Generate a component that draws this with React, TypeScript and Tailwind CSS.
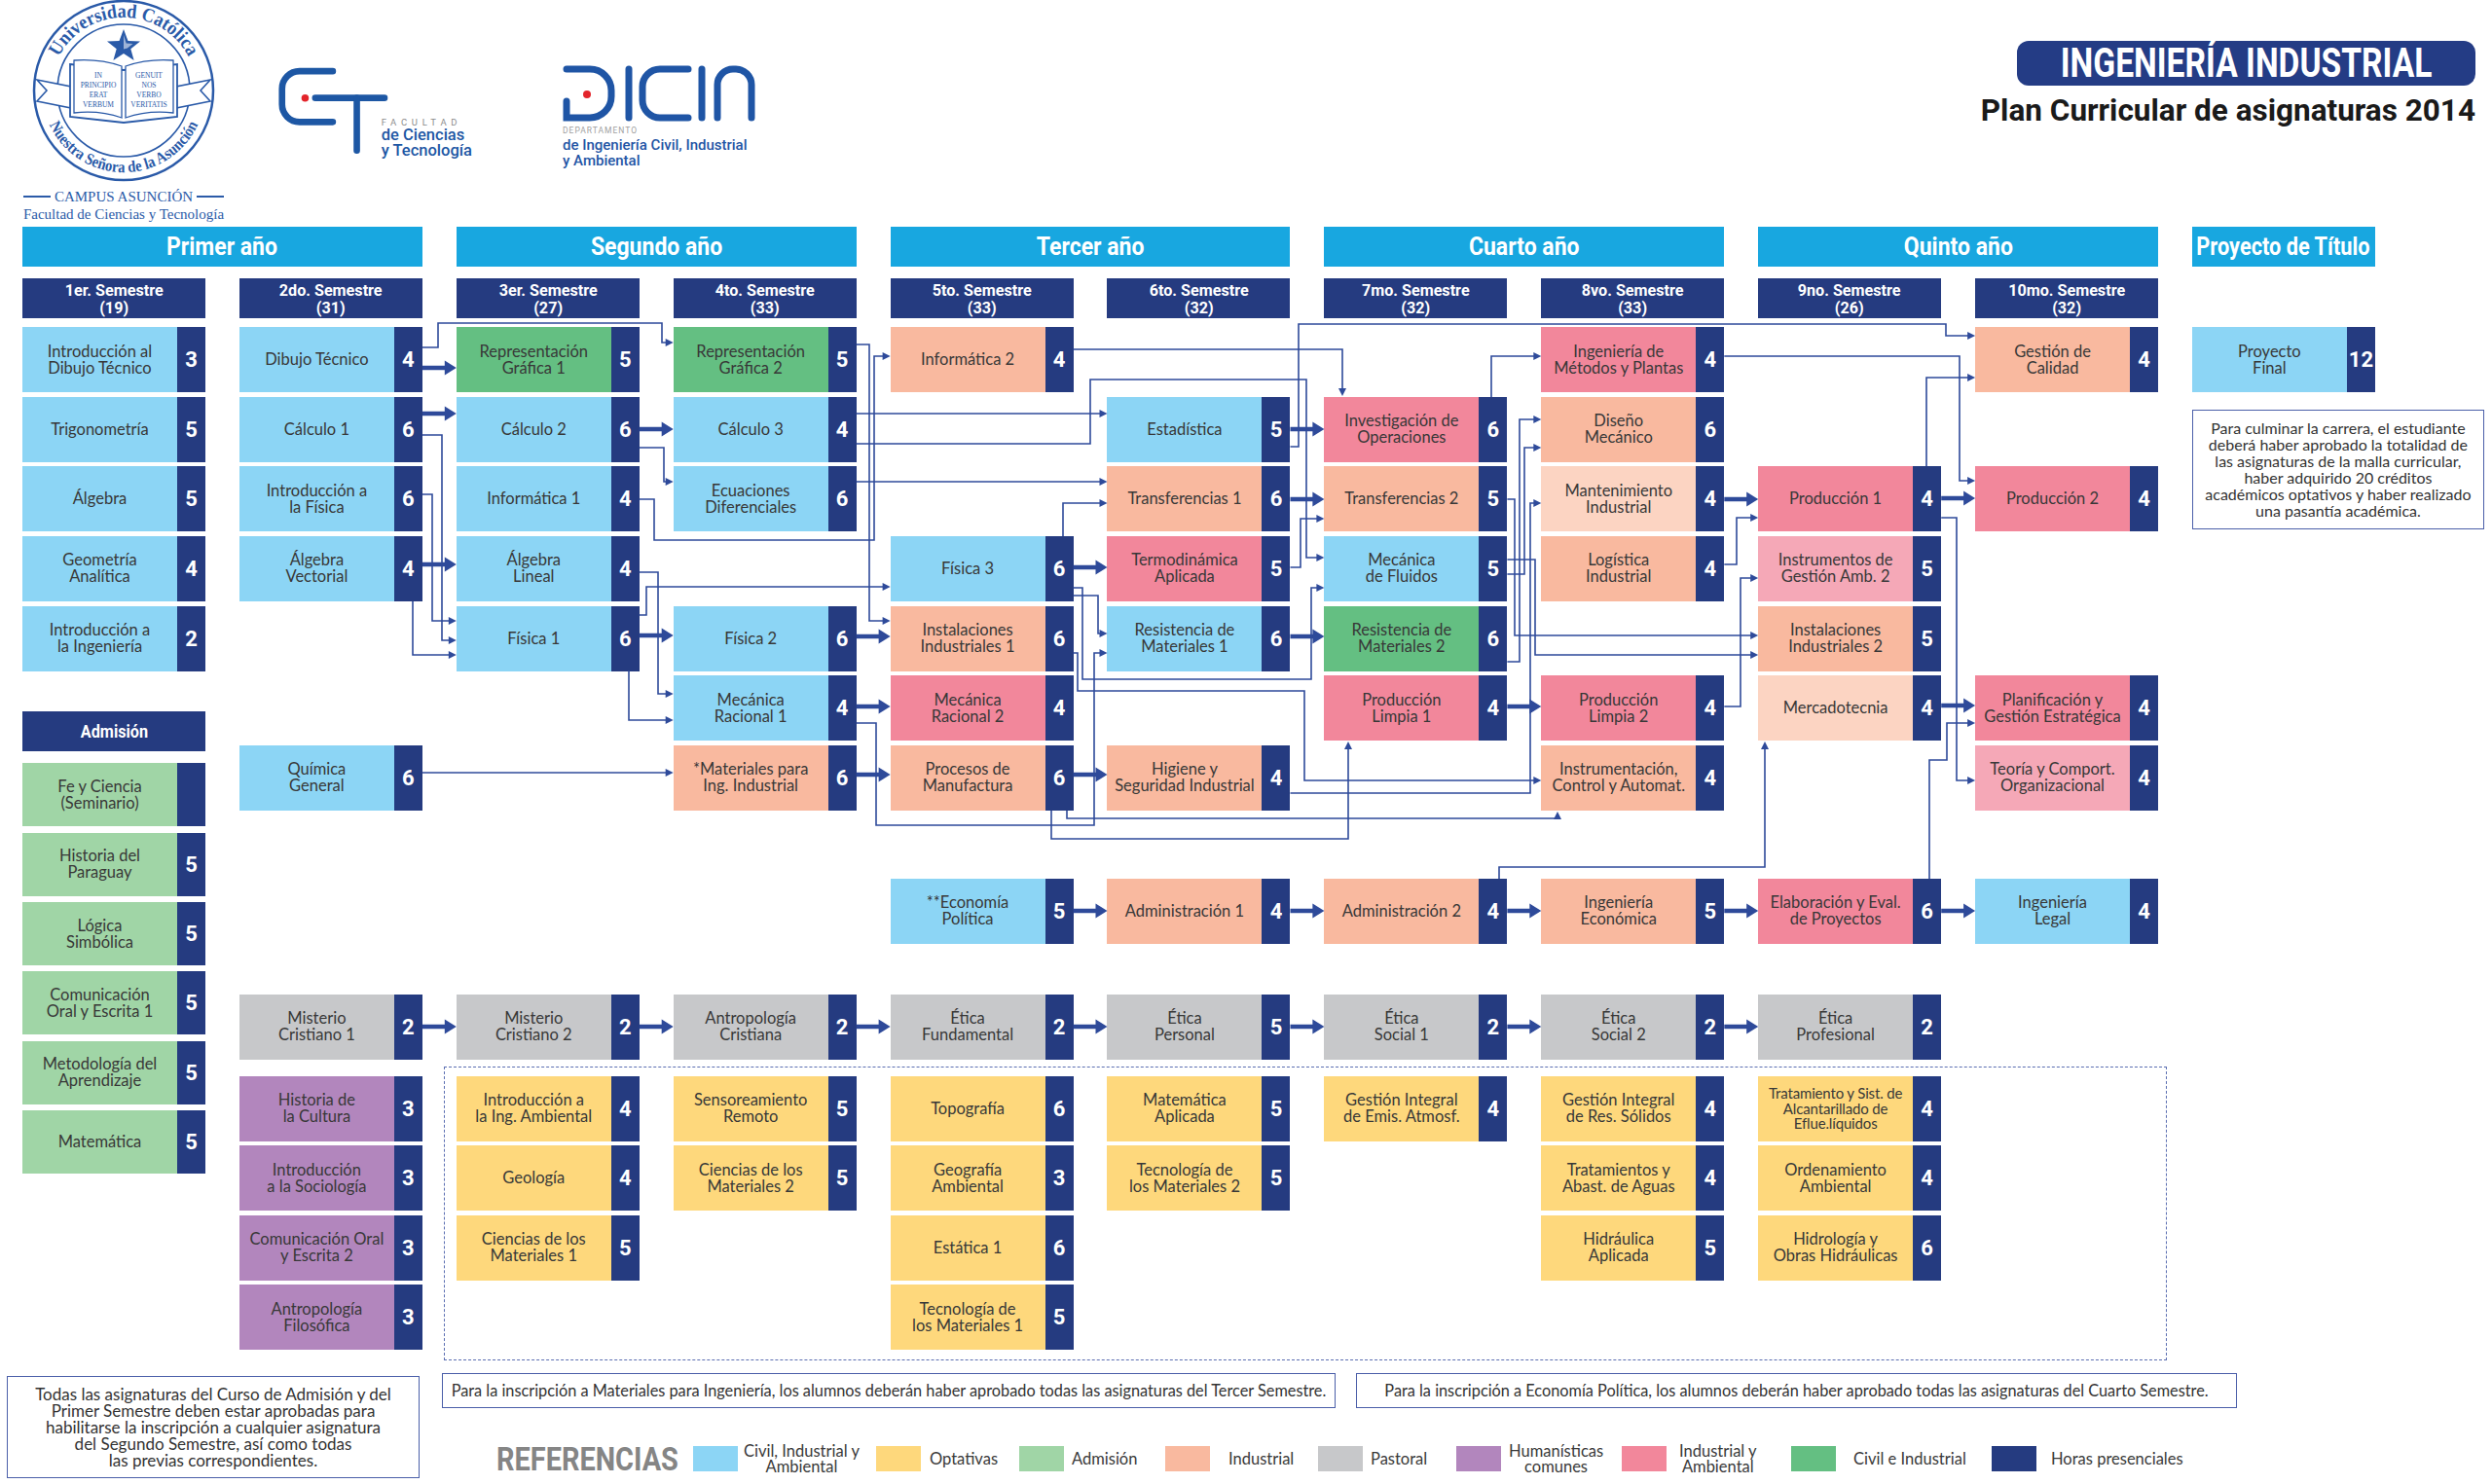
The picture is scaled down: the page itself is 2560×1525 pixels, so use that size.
import React from "react";

type Subject = { c: number; r: number; t: string[]; n?: string; bg: string; sm?: boolean };

const BLUE = "bg-[#8cd5f5]";
const GREEN = "bg-[#64bf82]";
const SALMON = "bg-[#f9b99f]";
const PEACH = "bg-[#fcd4c2]";
const PINK = "bg-[#f2879b]";
const LPINK = "bg-[#f5a8b7]";
const GRAY = "bg-[#c7c8ca]";
const PURPLE = "bg-[#b286bd]";
const YELLOW = "bg-[#fed87c]";
const ADM = "bg-[#a0d5a6]";
const NAVY = "bg-[#253b80]";

const COL: Record<number, string> = {
  1: "col-start-1",
  2: "col-start-2",
  3: "col-start-3",
  4: "col-start-4",
  5: "col-start-5",
  6: "col-start-6",
  7: "col-start-7",
  8: "col-start-8",
  9: "col-start-9",
  10: "col-start-10",
  11: "col-start-11",
};

const ROW: Record<number, string> = {
  1: "row-start-1",
  2: "row-start-2",
  3: "row-start-3",
  4: "row-start-4",
  5: "row-start-5",
  6: "row-start-6",
  7: "row-start-7",
  8: "row-start-8",
  9: "row-start-9",
  10: "row-start-10",
  11: "row-start-11",
  12: "row-start-12",
  13: "row-start-13",
  14: "row-start-14",
  15: "row-start-15",
};

// rows: 3-9 main rows, 10 economia, 11 pastoral, 12-15 optativas
const subjects: Subject[] = [
  { c: 1, r: 3, t: ["Introducción al", "Dibujo Técnico"], n: "3", bg: BLUE },
  { c: 1, r: 4, t: ["Trigonometría"], n: "5", bg: BLUE },
  { c: 1, r: 5, t: ["Álgebra"], n: "5", bg: BLUE },
  { c: 1, r: 6, t: ["Geometría", "Analítica"], n: "4", bg: BLUE },
  { c: 1, r: 7, t: ["Introducción a", "la Ingeniería"], n: "2", bg: BLUE },

  { c: 2, r: 3, t: ["Dibujo Técnico"], n: "4", bg: BLUE },
  { c: 2, r: 4, t: ["Cálculo 1"], n: "6", bg: BLUE },
  { c: 2, r: 5, t: ["Introducción a", "la Física"], n: "6", bg: BLUE },
  { c: 2, r: 6, t: ["Álgebra", "Vectorial"], n: "4", bg: BLUE },
  { c: 2, r: 9, t: ["Química", "General"], n: "6", bg: BLUE },
  { c: 2, r: 11, t: ["Misterio", "Cristiano 1"], n: "2", bg: GRAY },
  { c: 2, r: 12, t: ["Historia de", "la Cultura"], n: "3", bg: PURPLE },
  { c: 2, r: 13, t: ["Introducción", "a la Sociología"], n: "3", bg: PURPLE },
  { c: 2, r: 14, t: ["Comunicación Oral", "y Escrita 2"], n: "3", bg: PURPLE },
  { c: 2, r: 15, t: ["Antropología", "Filosófica"], n: "3", bg: PURPLE },

  { c: 3, r: 3, t: ["Representación", "Gráfica 1"], n: "5", bg: GREEN },
  { c: 3, r: 4, t: ["Cálculo 2"], n: "6", bg: BLUE },
  { c: 3, r: 5, t: ["Informática 1"], n: "4", bg: BLUE },
  { c: 3, r: 6, t: ["Álgebra", "Lineal"], n: "4", bg: BLUE },
  { c: 3, r: 7, t: ["Física 1"], n: "6", bg: BLUE },
  { c: 3, r: 11, t: ["Misterio", "Cristiano 2"], n: "2", bg: GRAY },
  { c: 3, r: 12, t: ["Introducción a", "la Ing. Ambiental"], n: "4", bg: YELLOW },
  { c: 3, r: 13, t: ["Geología"], n: "4", bg: YELLOW },
  { c: 3, r: 14, t: ["Ciencias de los", "Materiales 1"], n: "5", bg: YELLOW },

  { c: 4, r: 3, t: ["Representación", "Gráfica 2"], n: "5", bg: GREEN },
  { c: 4, r: 4, t: ["Cálculo 3"], n: "4", bg: BLUE },
  { c: 4, r: 5, t: ["Ecuaciones", "Diferenciales"], n: "6", bg: BLUE },
  { c: 4, r: 7, t: ["Física 2"], n: "6", bg: BLUE },
  { c: 4, r: 8, t: ["Mecánica", "Racional 1"], n: "4", bg: BLUE },
  { c: 4, r: 9, t: ["*Materiales para", "Ing. Industrial"], n: "6", bg: SALMON },
  { c: 4, r: 11, t: ["Antropología", "Cristiana"], n: "2", bg: GRAY },
  { c: 4, r: 12, t: ["Sensoreamiento", "Remoto"], n: "5", bg: YELLOW },
  { c: 4, r: 13, t: ["Ciencias de los", "Materiales 2"], n: "5", bg: YELLOW },

  { c: 5, r: 3, t: ["Informática 2"], n: "4", bg: SALMON },
  { c: 5, r: 6, t: ["Física 3"], n: "6", bg: BLUE },
  { c: 5, r: 7, t: ["Instalaciones", "Industriales 1"], n: "6", bg: SALMON },
  { c: 5, r: 8, t: ["Mecánica", "Racional 2"], n: "4", bg: PINK },
  { c: 5, r: 9, t: ["Procesos de", "Manufactura"], n: "6", bg: SALMON },
  { c: 5, r: 10, t: ["**Economía", "Política"], n: "5", bg: BLUE },
  { c: 5, r: 11, t: ["Ética", "Fundamental"], n: "2", bg: GRAY },
  { c: 5, r: 12, t: ["Topografía"], n: "6", bg: YELLOW },
  { c: 5, r: 13, t: ["Geografía", "Ambiental"], n: "3", bg: YELLOW },
  { c: 5, r: 14, t: ["Estática 1"], n: "6", bg: YELLOW },
  { c: 5, r: 15, t: ["Tecnología de", "los Materiales 1"], n: "5", bg: YELLOW },

  { c: 6, r: 4, t: ["Estadística"], n: "5", bg: BLUE },
  { c: 6, r: 5, t: ["Transferencias 1"], n: "6", bg: SALMON },
  { c: 6, r: 6, t: ["Termodinámica", "Aplicada"], n: "5", bg: PINK },
  { c: 6, r: 7, t: ["Resistencia de", "Materiales 1"], n: "6", bg: BLUE },
  { c: 6, r: 9, t: ["Higiene y", "Seguridad Industrial"], n: "4", bg: SALMON },
  { c: 6, r: 10, t: ["Administración 1"], n: "4", bg: SALMON },
  { c: 6, r: 11, t: ["Ética", "Personal"], n: "5", bg: GRAY },
  { c: 6, r: 12, t: ["Matemática", "Aplicada"], n: "5", bg: YELLOW },
  { c: 6, r: 13, t: ["Tecnología de", "los Materiales 2"], n: "5", bg: YELLOW },

  { c: 7, r: 4, t: ["Investigación de", "Operaciones"], n: "6", bg: PINK },
  { c: 7, r: 5, t: ["Transferencias 2"], n: "5", bg: SALMON },
  { c: 7, r: 6, t: ["Mecánica", "de Fluidos"], n: "5", bg: BLUE },
  { c: 7, r: 7, t: ["Resistencia de", "Materiales 2"], n: "6", bg: GREEN },
  { c: 7, r: 8, t: ["Producción", "Limpia 1"], n: "4", bg: PINK },
  { c: 7, r: 10, t: ["Administración 2"], n: "4", bg: SALMON },
  { c: 7, r: 11, t: ["Ética", "Social 1"], n: "2", bg: GRAY },
  { c: 7, r: 12, t: ["Gestión Integral", "de Emis. Atmosf."], n: "4", bg: YELLOW },

  { c: 8, r: 3, t: ["Ingeniería de", "Métodos y Plantas"], n: "4", bg: PINK },
  { c: 8, r: 4, t: ["Diseño", "Mecánico"], n: "6", bg: SALMON },
  { c: 8, r: 5, t: ["Mantenimiento", "Industrial"], n: "4", bg: PEACH },
  { c: 8, r: 6, t: ["Logística", "Industrial"], n: "4", bg: SALMON },
  { c: 8, r: 8, t: ["Producción", "Limpia 2"], n: "4", bg: PINK },
  { c: 8, r: 9, t: ["Instrumentación,", "Control y Automat."], n: "4", bg: SALMON },
  { c: 8, r: 10, t: ["Ingeniería", "Económica"], n: "5", bg: SALMON },
  { c: 8, r: 11, t: ["Ética", "Social 2"], n: "2", bg: GRAY },
  { c: 8, r: 12, t: ["Gestión Integral", "de Res. Sólidos"], n: "4", bg: YELLOW },
  { c: 8, r: 13, t: ["Tratamientos y", "Abast. de Aguas"], n: "4", bg: YELLOW },
  { c: 8, r: 14, t: ["Hidráulica", "Aplicada"], n: "5", bg: YELLOW },

  { c: 9, r: 5, t: ["Producción 1"], n: "4", bg: PINK },
  { c: 9, r: 6, t: ["Instrumentos de", "Gestión Amb. 2"], n: "5", bg: LPINK },
  { c: 9, r: 7, t: ["Instalaciones", "Industriales 2"], n: "5", bg: SALMON },
  { c: 9, r: 8, t: ["Mercadotecnia"], n: "4", bg: PEACH },
  { c: 9, r: 10, t: ["Elaboración y Eval.", "de Proyectos"], n: "6", bg: PINK },
  { c: 9, r: 11, t: ["Ética", "Profesional"], n: "2", bg: GRAY },
  { c: 9, r: 12, t: ["Tratamiento y Sist. de", "Alcantarillado de", "Eflue.líquidos"], n: "4", bg: YELLOW, sm: true },
  { c: 9, r: 13, t: ["Ordenamiento", "Ambiental"], n: "4", bg: YELLOW },
  { c: 9, r: 14, t: ["Hidrología y", "Obras Hidráulicas"], n: "6", bg: YELLOW },

  { c: 10, r: 3, t: ["Gestión de", "Calidad"], n: "4", bg: SALMON },
  { c: 10, r: 5, t: ["Producción 2"], n: "4", bg: PINK },
  { c: 10, r: 8, t: ["Planificación y", "Gestión Estratégica"], n: "4", bg: PINK },
  { c: 10, r: 9, t: ["Teoría y Comport.", "Organizacional"], n: "4", bg: LPINK },
  { c: 10, r: 10, t: ["Ingeniería", "Legal"], n: "4", bg: BLUE },

  { c: 11, r: 3, t: ["Proyecto", "Final"], n: "12", bg: BLUE },
];

const admision: { t: string[]; n?: string }[] = [
  { t: ["Fe y Ciencia", "(Seminario)"] },
  { t: ["Historia del", "Paraguay"], n: "5" },
  { t: ["Lógica", "Simbólica"], n: "5" },
  { t: ["Comunicación", "Oral y Escrita 1"], n: "5" },
  { t: ["Metodología del", "Aprendizaje"], n: "5" },
  { t: ["Matemática"], n: "5" },
];

const years = [
  { cls: "col-start-1 col-span-2", label: "Primer año", sc: "scale-x-[0.92]" },
  { cls: "col-start-3 col-span-2", label: "Segundo año", sc: "scale-x-[0.92]" },
  { cls: "col-start-5 col-span-2", label: "Tercer año", sc: "scale-x-[0.92]" },
  { cls: "col-start-7 col-span-2", label: "Cuarto año", sc: "scale-x-[0.92]" },
  { cls: "col-start-9 col-span-2", label: "Quinto año", sc: "scale-x-[0.92]" },
  { cls: "col-start-11", label: "Proyecto de Título", sc: "scale-x-[0.87]" },
];

const semesters = [
  ["1er. Semestre", "(19)"],
  ["2do. Semestre", "(31)"],
  ["3er. Semestre", "(27)"],
  ["4to. Semestre", "(33)"],
  ["5to. Semestre", "(33)"],
  ["6to. Semestre", "(32)"],
  ["7mo. Semestre", "(32)"],
  ["8vo. Semestre", "(33)"],
  ["9no. Semestre", "(26)"],
  ["10mo. Semestre", "(32)"],
];

const legend = [
  { bg: BLUE, label: ["Civil, Industrial y", "Ambiental"], w: "w-[188px]", gap: "ml-[6px]" },
  { bg: YELLOW, label: ["Optativas"], w: "w-[147px]", gap: "ml-[9px]" },
  { bg: ADM, label: ["Admisión"], w: "w-[150px]", gap: "ml-[8px]" },
  { bg: SALMON, label: ["Industrial"], w: "w-[157px]", gap: "ml-[19px]" },
  { bg: GRAY, label: ["Pastoral"], w: "w-[142px]", gap: "ml-[8px]" },
  { bg: PURPLE, label: ["Humanísticas", "comunes"], w: "w-[170px]", gap: "ml-[8px]" },
  { bg: PINK, label: ["Industrial y", "Ambiental"], w: "w-[174px]", gap: "ml-[13px]" },
  { bg: GREEN, label: ["Civil e Industrial"], w: "w-[206px]", gap: "ml-[18px]" },
  { bg: NAVY, label: ["Horas presenciales"], w: "w-[220px]", gap: "ml-[15px]" },
];

// connector geometry (page pixels)
const L = (c: number) => 23 + (c - 1) * 222.9;
const R = (c: number) => L(c) + 188;
const LINE = "#2e4a9a";

const thick: [number, number][] = [
  [2, 378], [2, 425], [2, 580],
  [3, 441], [3, 653],
  [4, 654], [4, 726], [4, 796],
  [5, 583], [5, 796],
  [6, 441], [6, 513], [6, 654],
  [7, 726],
  [8, 513],
  [9, 512], [9, 725],
  [5, 936], [6, 936], [7, 936], [8, 936], [9, 936],
  [2, 1055], [3, 1055], [4, 1055], [5, 1055], [6, 1055], [7, 1055], [8, 1055],
];

const thin: number[][][] = [
  [[R(2), 357], [450, 357], [450, 332], [680, 332], [680, 352], [L(4), 352]],
  [[R(2), 447], [454, 447], [454, 658], [L(3), 658]],
  [[R(2), 508], [444, 508], [444, 638], [L(3), 638]],
  [[424, 618], [424, 673], [L(3), 673]],
  [[R(3), 460], [682, 460], [682, 495], [L(4), 495]],
  [[R(3), 513], [672, 513], [672, 555], [898, 555], [898, 366], [L(5), 366]],
  [[R(3), 588], [676, 588], [676, 713], [L(4), 713]],
  [[646, 689], [646, 740], [L(4), 740]],
  [[R(3), 632], [664, 632], [664, 603], [L(5), 603]],
  [[R(2), 794], [L(4), 794]],
  [[R(4), 354], [893, 354], [893, 638], [L(5), 638]],
  [[R(4), 743], [900, 743], [900, 848], [1124, 848], [1124, 671], [L(6), 671]],
  [[R(4), 495], [L(6), 495]],
  [[R(4), 425], [L(6), 425]],
  [[R(4), 456], [1120, 456], [1120, 390], [1342, 390], [1342, 573], [L(7), 573]],
  [[1092, 551], [1092, 517], [L(6), 517]],
  [[R(5), 604], [1112, 604], [1112, 698], [1347, 698], [1347, 604], [L(7), 604]],
  [[R(5), 612], [1128, 612], [1128, 651], [L(6), 651]],
  [[R(5), 359], [1379, 359], [1379, 407]],
  [[R(6), 459], [1334, 459], [1334, 333], [1999, 333], [1999, 345], [L(10), 345]],
  [[R(6), 583], [1336, 583], [1336, 533], [L(7), 533]],
  [[1532, 408], [1532, 366], [L(8), 366]],
  [[R(8), 366], [2013, 366], [2013, 494], [L(10), 494]],
  [[1979, 479], [1979, 388], [L(10), 388]],
  [[R(9), 532], [2010, 532], [2010, 802], [L(10), 802]],
  [[R(8), 580], [1784, 580], [1784, 532], [L(9), 532]],
  [[R(8), 726], [1788, 726], [1788, 594], [L(9), 594]],
  [[R(7), 513], [1556, 513], [1556, 653], [L(9), 653]],
  [[R(7), 575], [1577, 575], [1577, 673], [L(9), 673]],
  [[R(7), 680], [1561, 680], [1561, 431], [L(8), 431]],
  [[R(7), 590], [1566, 590], [1566, 460], [L(8), 460]],
  [[R(6), 815], [1572, 815], [1572, 517], [L(8), 517]],
  [[R(5), 671], [1107, 671], [1107, 710], [1340, 710], [1340, 802], [L(8), 802]],
  [[1080, 833], [1080, 862], [1385, 862], [1385, 762]],
  [[1096, 833], [1096, 841], [1600, 841], [1600, 834]],
  [[1540, 903], [1540, 891], [1813, 891], [1813, 762]],
  [[1982, 903], [1982, 781], [2000, 781], [2000, 743], [L(10), 743]],
];

function Connectors() {
  return (
    <svg className="absolute left-0 top-0 pointer-events-none" width={2560} height={1525}>
      {thin.map((pts, i) => {
        const [x1, y1] = pts[pts.length - 2];
        const [x2, y2] = pts[pts.length - 1];
        const dx = x2 - x1;
        const dy = y2 - y1;
        const len = Math.hypot(dx, dy) || 1;
        const ux = dx / len;
        const uy = dy / len;
        const bx = x2 - ux * 8;
        const by = y2 - uy * 8;
        const px = -uy * 4;
        const py = ux * 4;
        const line = [...pts.slice(0, -1), [bx + ux, by + uy]];
        return (
          <g key={i}>
            <polyline
              points={line.map((p) => p.join(",")).join(" ")}
              fill="none"
              stroke={LINE}
              strokeWidth={1.6}
            />
            <polygon points={`${x2},${y2} ${bx + px},${by + py} ${bx - px},${by - py}`} fill={LINE} />
          </g>
        );
      })}
      {thick.map(([c, y], i) => {
        const x1 = R(c);
        const x2 = L(c + 1);
        return (
          <g key={`t${i}`}>
            <line x1={x1} y1={y} x2={x2 - 10} y2={y} stroke={LINE} strokeWidth={4.5} />
            <polygon points={`${x2 - 12},${y - 7.5} ${x2},${y} ${x2 - 12},${y + 7.5}`} fill={LINE} />
          </g>
        );
      })}
    </svg>
  );
}

function Lines({ t }: { t: string[] }) {
  return (
    <span className="whitespace-nowrap">
      {t.map((l, i) => (
        <React.Fragment key={i}>
          {i > 0 && <br />}
          {l}
        </React.Fragment>
      ))}
    </span>
  );
}

function Cell({ t, n, bg, sm, className }: { t: string[]; n?: string; bg: string; sm?: boolean; className: string }) {
  return (
    <div className={`${className} flex ${bg}`}>
      <div
        className={`flex-1 flex items-center justify-center text-center text-[#383838] ${
          sm ? "text-[15px] leading-[15.5px] tracking-[-0.01em]" : "text-[16.5px] leading-[17px]"
        }`}
      >
        <Lines t={t} />
      </div>
      <div className="w-[29px] shrink-0 bg-[#253b80] flex items-center justify-center text-white font-['Roboto',sans-serif] font-bold text-[22px]">
        {n}
      </div>
    </div>
  );
}

function Seal() {
  const blue = "#2a5aa8";
  return (
    <svg width="190" height="188" viewBox="0 0 190 188">
      <defs>
        <path id="sealTop" d="M 27 61.3 A 75 75 0 0 1 163 61.3" />
        <path id="sealBot" d="M 17.1 124.5 A 84 84 0 0 0 172.9 124.5" />
      </defs>
      <circle cx="95" cy="93" r="92" fill="none" stroke={blue} strokeWidth="2.5" />
      <circle cx="95" cy="93" r="68" fill="none" stroke={blue} strokeWidth="1.6" />
      <path d="M 6 82 L 46 90 L 46 112 L 6 104 L 16 93 Z" fill="white" stroke={blue} strokeWidth="1.6" />
      <path d="M 184 82 L 144 90 L 144 112 L 184 104 L 174 93 Z" fill="white" stroke={blue} strokeWidth="1.6" />
      <text fontFamily="'Liberation Serif', serif" fontWeight="bold" fontSize="20" fill={blue}>
        <textPath href="#sealTop" startOffset="50%" textAnchor="middle" textLength={164} lengthAdjust="spacingAndGlyphs">
          Universidad Católica
        </textPath>
      </text>
      <text fontFamily="'Liberation Serif', serif" fontWeight="bold" fontSize="16.5" fill={blue}>
        <textPath href="#sealBot" startOffset="50%" textAnchor="middle" textLength={192} lengthAdjust="spacingAndGlyphs">
          Nuestra Señora de la Asunción
        </textPath>
      </text>
      <path d="M 40 66 L 95 72 L 150 66 L 150 120 L 95 126 L 40 120 Z" fill="white" stroke={blue} strokeWidth="1.8" />
      <path d="M 44 62 Q 70 60 93 68 L 93 121 Q 70 113 44 116 Z" fill="white" stroke={blue} strokeWidth="1.3" />
      <path d="M 146 62 Q 120 60 97 68 L 97 121 Q 120 113 146 116 Z" fill="white" stroke={blue} strokeWidth="1.3" />
      <g fontFamily="'Liberation Serif', serif" fontSize="7.5" fill={blue} textAnchor="middle">
        <text x="69" y="80">IN</text>
        <text x="69" y="90">PRINCIPIO</text>
        <text x="69" y="100">ERAT</text>
        <text x="69" y="110">VERBUM</text>
        <text x="121" y="80">GENUIT</text>
        <text x="121" y="90">NOS</text>
        <text x="121" y="100">VERBO</text>
        <text x="121" y="110">VERITATIS</text>
      </g>
      <polygon
        points="95,30 99.5,42 112,42.5 102.3,50.3 105.6,62 95,55 84.4,62 87.7,50.3 78,42.5 90.5,42"
        fill={blue}
      />
      <polygon points="95,36 97.7,44.5 104.5,45 98.8,49.5 95,50.5" fill="white" opacity="0.55" />
    </svg>
  );
}

function CTLogo() {
  const blue = "#1d57a4";
  return (
    <svg width="120" height="96" viewBox="0 0 120 96">
      <path d="M 60 6 H 24 A 19 19 0 0 0 5 25 V 42 A 19 19 0 0 0 24 61 H 60" fill="none" stroke={blue} strokeWidth="7" strokeLinecap="round" />
      <circle cx="30" cy="35" r="4" fill="#e3242b" />
      <path d="M 41 35 H 116" fill="none" stroke={blue} strokeWidth="7" strokeLinecap="round" />
      <path d="M 86 35 V 92" fill="none" stroke={blue} strokeWidth="7" strokeLinecap="round" />
    </svg>
  );
}

function DicinLogo() {
  const blue = "#1f55a5";
  return (
    <svg width="200" height="60" viewBox="0 0 200 60">
      <g fill="none" stroke={blue} strokeWidth="7" strokeLinecap="round">
        <path d="M 4 5 H 28 A 22 22 0 0 1 50 27 V 33 A 22 22 0 0 1 28 55 H 4 V 38" />
        <path d="M 68 5 V 55" />
        <path d="M 129 5 H 100 A 18 18 0 0 0 82 23 V 37 A 18 18 0 0 0 100 55 H 129" />
        <path d="M 143 5 V 55" />
        <path d="M 159 55 V 21 A 16 16 0 0 1 175 5 H 178 A 16 16 0 0 1 194 21 V 55" />
      </g>
      <circle cx="25" cy="31" r="4" fill="#e3242b" />
    </svg>
  );
}

export default function App() {
  return (
    <div className="relative w-[2560px] h-[1525px] overflow-hidden bg-white font-['Lato',sans-serif]">
      {/* Header */}
      <div className="flex h-[233px]">
        <div className="ml-[22px] w-[210px] flex flex-col items-center text-[#2b5ba8] font-['Liberation_Serif',serif]">
          <Seal />
          <div className="mt-[5px] flex items-center whitespace-nowrap text-[15px] leading-[18px]">
            <span className="w-[28px] h-[1.5px] shrink-0 bg-[#2b5ba8]" />
            <span className="mx-[4px]">CAMPUS ASUNCIÓN</span>
            <span className="w-[28px] h-[1.5px] shrink-0 bg-[#2b5ba8]" />
          </div>
          <div className="whitespace-nowrap text-[15px] leading-[18px]">Facultad de Ciencias y Tecnología</div>
        </div>

        <div className="ml-[53px] mt-[65px] w-[200px] flex items-start">
          <CTLogo />
          <div className="-ml-[7px] mt-[55px] flex flex-col font-['Roboto',sans-serif] whitespace-nowrap">
            <span className="text-[9.5px] leading-[11px] tracking-[0.5em] text-[#8c8c8c]">FACULTAD</span>
            <span className="text-[16.5px] leading-[16px] font-medium text-[#1d57a4]">de Ciencias</span>
            <span className="text-[16.5px] leading-[16px] font-medium text-[#1d57a4]">y Tecnología</span>
          </div>
        </div>

        <div className="ml-[93px] mt-[66px] w-[200px] flex flex-col font-['Roboto',sans-serif] whitespace-nowrap">
          <DicinLogo />
          <span className="mt-[3px] text-[8.5px] leading-[10px] tracking-[0.12em] text-[#a0a0a0]">DEPARTAMENTO</span>
          <span className="mt-[2px] text-[15px] leading-[16px] font-medium text-[#1f55a5]">de Ingeniería Civil, Industrial</span>
          <span className="text-[15px] leading-[16px] font-medium text-[#1f55a5]">y Ambiental</span>
        </div>

        <div className="ml-auto mr-[17px] mt-[42px] flex flex-col items-end font-['Roboto',sans-serif]">
          <div className="w-[471px] h-[46px] rounded-[12px] bg-[#243c85] flex items-center justify-center">
            <span className="inline-block whitespace-nowrap scale-x-[0.8] text-white font-bold text-[42px] leading-none">
              INGENIERÍA INDUSTRIAL
            </span>
          </div>
          <div className="mt-[10px] text-[31.5px] leading-[31px] font-bold text-[#1a1a1a] whitespace-nowrap">
            Plan Curricular de asignaturas 2014
          </div>
        </div>
      </div>

      {/* Curriculum grid */}
      <div className="ml-[23px] grid grid-cols-[repeat(11,188px)] gap-x-[34.9px] grid-rows-[53px_50px_repeat(6,71.67px)_137px_119px_84px_repeat(3,71.5px)_67px]">
        <div className="col-start-3 col-end-11 row-start-12 row-end-16 -ml-[13px] -mr-[9px] -mt-[10px] -mb-[11px] border-[1.5px] border-dashed border-[#5c6fb2]" />

        {years.map((y) => (
          <div
            key={y.label}
            className={`${y.cls} row-start-1 self-start h-[41px] bg-[#18a7e0] text-white flex items-center justify-center font-['Roboto',sans-serif] font-bold text-[25px] leading-none`}
          >
            <span className={`inline-block whitespace-nowrap ${y.sc}`}>{y.label}</span>
          </div>
        ))}

        {semesters.map((s, i) => (
          <div
            key={s[0]}
            className={`${COL[i + 1]} row-start-2 self-start h-[41px] bg-[#253b80] text-white flex items-center justify-center text-center font-['Roboto',sans-serif] font-bold text-[17px] leading-[18px]`}
          >
            <span className="inline-block whitespace-nowrap scale-x-[0.95]">
              {s[0]}
              <br />
              {s[1]}
            </span>
          </div>
        ))}

        {subjects.map((s) => (
          <Cell
            key={`${s.c}-${s.r}`}
            t={s.t}
            n={s.n}
            bg={s.bg}
            sm={s.sm}
            className={`${COL[s.c]} ${ROW[s.r]} self-start h-[67px]`}
          />
        ))}

        <div className="col-start-1 row-start-8 row-end-16 self-start pt-[37px] flex flex-col">
          <div className="h-[41px] bg-[#253b80] text-white flex items-center justify-center font-['Roboto',sans-serif] font-bold text-[18px]">
            <span className="inline-block scale-x-[0.9]">Admisión</span>
          </div>
          <div className="mt-[12px] flex flex-col gap-[6.4px]">
            {admision.map((a) => (
              <Cell key={a.t[0]} t={a.t} n={a.n} bg={ADM} className="h-[65px]" />
            ))}
          </div>
        </div>

        <div className="col-start-11 row-start-4 row-span-2 self-start mt-[13px] w-[300px] h-[123px] border-[1.5px] border-[#4b5fa9] flex items-center justify-center text-center text-[16px] leading-[17px] text-[#333]">
          <Lines
            t={[
              "Para culminar la carrera, el estudiante",
              "deberá haber aprobado la totalidad de",
              "las asignaturas de la malla curricular,",
              "haber adquirido 20 créditos",
              "académicos optativos y haber realizado",
              "una pasantía académica.",
            ]}
          />
        </div>
      </div>

      {/* Notes and legend */}
      <div className="flex items-start mt-[23.5px]">
        <div className="ml-[7px] mt-[3px] w-[424px] h-[105px] border-[1.5px] border-[#4b5fa9] flex items-center justify-center text-center text-[17px] leading-[17px] text-[#333]">
          <Lines
            t={[
              "Todas las asignaturas del Curso de Admisión y del",
              "Primer Semestre deben estar aprobadas para",
              "habilitarse la inscripción a cualquier asignatura",
              "del Segundo Semestre, así como todas",
              "las previas correspondientes.",
            ]}
          />
        </div>
        <div className="ml-[23px] flex flex-col">
          <div className="flex gap-[21px]">
            <div className="w-[918px] h-[36px] border-[1.5px] border-[#4b5fa9] flex items-center justify-center whitespace-nowrap text-[16.3px] text-[#333]">
              Para la inscripción a Materiales para Ingeniería, los alumnos deberán haber aprobado todas las asignaturas del Tercer Semestre.
            </div>
            <div className="w-[905px] h-[36px] border-[1.5px] border-[#4b5fa9] flex items-center justify-center whitespace-nowrap text-[16.3px] text-[#333]">
              Para la inscripción a Economía Política, los alumnos deberán haber aprobado todas las asignaturas del Cuarto Semestre.
            </div>
          </div>
          <div className="mt-[39px] ml-[56px] flex items-center h-[26px]">
            <div className="w-[187px] h-[26px] flex items-center">
              <span className="inline-block origin-left scale-x-[0.85] font-['Roboto',sans-serif] font-bold text-[34px] leading-none text-[#858585]">
                REFERENCIAS
              </span>
            </div>
            <div className="ml-[15px] flex items-center">
              {legend.map((l) => (
                <div key={l.label.join(" ")} className={`${l.w} flex items-center`}>
                  <div className={`w-[46px] h-[26px] shrink-0 ${l.bg}`} />
                  <div className={`${l.gap} text-center text-[16.5px] leading-[16px] text-[#3a3a3a]`}>
                    <Lines t={l.label} />
                  </div>
                </div>
              ))}
            </div>
          </div>
        </div>
      </div>

      <Connectors />
    </div>
  );
}
